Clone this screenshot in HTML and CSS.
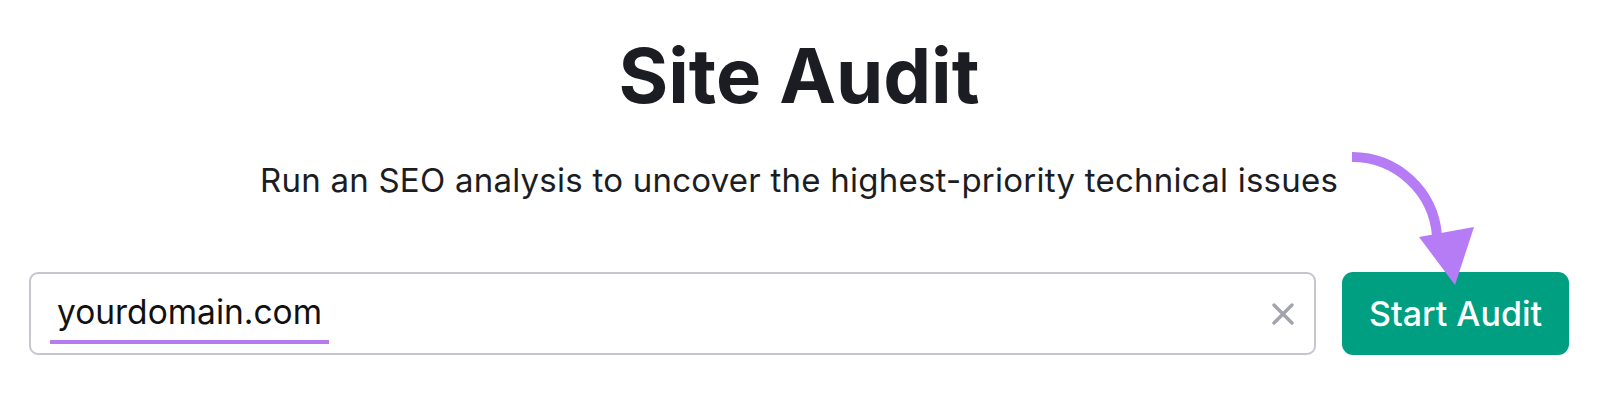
FILE: index.html
```html
<!DOCTYPE html>
<html lang="en">

<head>
  <meta charset="UTF-8">
  <meta name="viewport" content="width=device-width, initial-scale=1.0">
  <title>Site Audit</title>
  <link rel="stylesheet" href="styles.css">
</head>

<body>
  <div class="audit">
    <h1>Site Audit</h1>
    <p class="subtitle">Run an SEO analysis to uncover the highest-priority technical issues</p>

    <div class="audit-form">
      <div class="domain-field">
        <span class="domain-value">yourdomain.com</span>
        <svg class="clear-icon" width="22" height="22" viewBox="0 0 22 22">
          <path d="M2 2 L20 20 M20 2 L2 20" stroke="#a3a4ad" stroke-width="3.4" stroke-linecap="round" />
        </svg>
      </div>
      <button class="start-btn">Start Audit</button>

      <!-- pointer arrow -->
      <svg class="pointer" width="140" height="150" viewBox="0 0 140 150">
        <path d="M10 17 A85 85 0 0 1 95 96" fill="none" stroke="#b57cf6" stroke-width="10" />
        <polygon points="77,97 132,87 113,145" fill="#b57cf6" />
      </svg>
    </div>
  </div>
</body>

</html>
```

FILE: styles.css
```css
/* Base styles */
body {
  margin: 0;
  background: #fff;
  font-family: Inter, "Noto Sans", sans-serif;
  color: #1b1d23;
}

.audit {
  padding: 0 31px 0 29px;
  text-align: center;
}

h1 {
  font-size: 76px;
  font-weight: 700;
  line-height: 1;
  margin: 0;
  padding-top: 37px;
}

.subtitle {
  font-size: 33px;
  letter-spacing: 0.24px;
  line-height: 1;
  margin: 51px 0 0;
}

.audit-form {
  display: flex;
  gap: 26px;
  margin-top: 75px;
  position: relative;
}

.domain-field {
  flex: 1;
  height: 83px;
  box-sizing: border-box;
  border: 2px solid #c6c7cd;
  border-radius: 9px;
  display: flex;
  align-items: center;
  justify-content: space-between;
  padding: 0 20px 0 19px;
}

.domain-value {
  font-size: 33.5px;
  line-height: 1;
  padding: 0 7px 10px 7px;
  border-bottom: 4px solid #b57cf0;
  margin-top: 13px;
  color: #111;
}

.clear-icon {
  flex: none;
}

.start-btn {
  width: 227px;
  height: 83px;
  border: none;
  border-radius: 11px;
  background: #009f81;
  color: #fff;
  font-family: Inter, "Noto Sans", sans-serif;
  font-size: 34px;
  font-weight: 500;
}

/* Arrow pointing at the button */
.pointer {
  position: absolute;
  left: 1313px;
  top: -132px;
}
```
